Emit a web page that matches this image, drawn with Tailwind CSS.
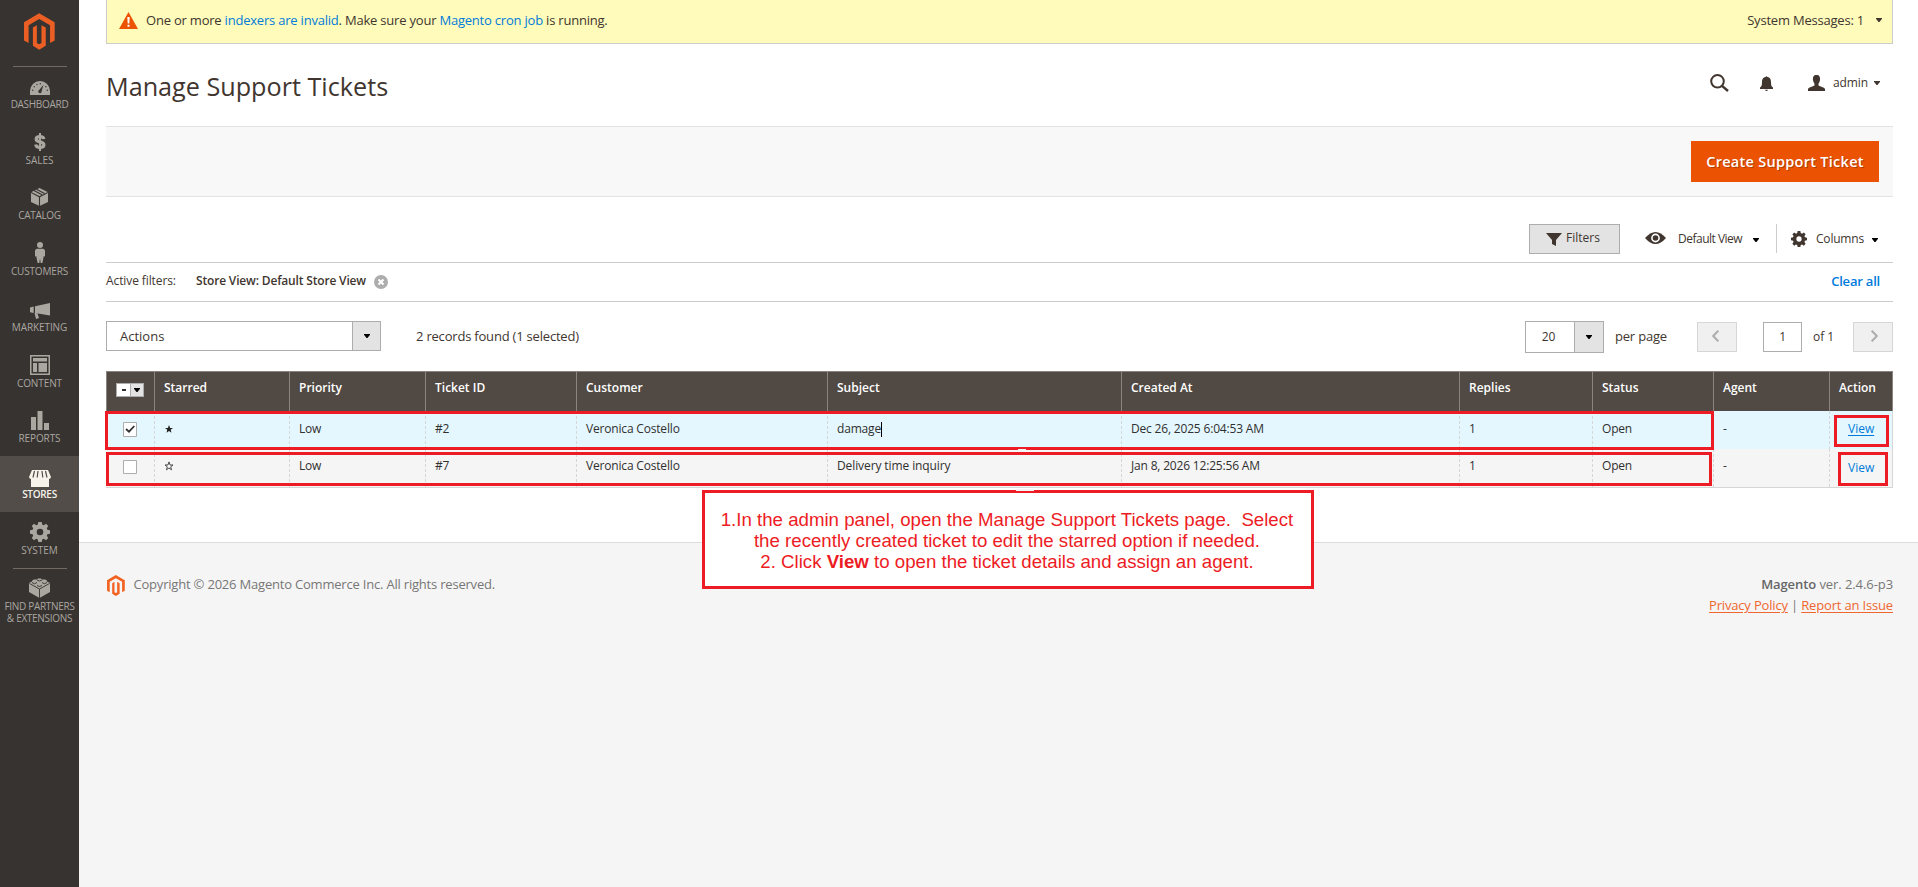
<!DOCTYPE html>
<html lang="en">
<head>
<meta charset="utf-8">
<title>Manage Support Tickets</title>
<script src="https://cdn.jsdelivr.net/npm/@tailwindcss/browser@4"></script>
</head>
<body class="relative flex h-[887px] w-[1918px] overflow-hidden bg-white font-['Open_Sans',sans-serif] text-[13px] leading-[18px] text-[#41362f]">

<svg class="hidden">
  <symbol id="logo" viewBox="72 40 94 110"><path d="M118 40 165 67V122L151 130V76L118 57 86 76V130L72 122V67ZM99 83 111 76V130L118 134 125 130V76L138 83V138L118 150 99 138Z"/></symbol>
  <symbol id="caret" viewBox="0 0 6 4"><path d="M0 0H6V.8L3.5 4H2.5L0 .8Z"/></symbol>
  <symbol id="gear" viewBox="0 0 20 20"><path fill-rule="evenodd" d="M8.3 0h3.4l.5 2.6 1.6.7L16 1.8 18.3 4l-1.5 2.2.6 1.6 2.6.5v3.4l-2.6.5-.6 1.6 1.5 2.2-2.3 2.3-2.2-1.5-1.6.7-.5 2.5H8.3l-.5-2.5-1.6-.7L4 18.300 1.700 16l1.500-2.200-.6-1.600L0 11.700V8.300l2.600-.5.6-1.600L1.700 4 4 1.800l2.200 1.500 1.600-.7ZM10 6.700a3.300 3.300 0 1 0 0 6.600 3.300 3.300 0 0 0 0-6.600Z"/></symbol>
</svg>

<!-- Sidebar -->
<nav class="flex h-full w-[79px] shrink-0 flex-col bg-[#373330] text-center text-[10px] leading-[12px] tracking-[-.3px] text-[#aaa6a0]">
  <div class="flex h-[65px] shrink-0 justify-center pt-[13px]"><svg class="h-[37px] w-[31px] fill-[#eb5f24]"><use href="#logo"/></svg></div>
  <div class="mx-[13px] h-px w-[54px] shrink-0 translate-y-px bg-[#736963]"></div>
  <a class="flex h-[55.71px] shrink-0 flex-col items-center"><span class="flex h-[32px] items-end pb-[3px]"><svg class="h-[14px] w-5 fill-current" viewBox="0 0 20 14"><path d="M0 14V10A10 10 0 0 1 20 10V14Z"/><g class="fill-[#373330]"><path d="M13.500 3.800 11.600 10.300A1.700 1.700 0 1 1 9.200 9Z"/><circle cx="2.700" cy="9.300" r=".7"/><circle cx="4.200" cy="5.800" r=".7"/><circle cx="7" cy="3.500" r=".7"/><circle cx="10.300" cy="2.700" r=".7"/><circle cx="15.900" cy="5.800" r=".7"/><circle cx="17.300" cy="9.300" r=".7"/></g></svg></span><span>DASHBOARD</span></a>
  <a class="flex h-[55.71px] shrink-0 flex-col items-center"><span class="flex h-[32px] items-end pb-[3px]"><svg class="h-[18px] w-3 fill-none stroke-current" viewBox="0 0 12 18"><path stroke-width="3.200" d="M9.800 6.200C9.600 4.300 8.200 3.600 6 3.600S2.200 4.500 2.200 6.200C2.200 10 9.900 7.800 9.900 11.800 9.900 13.600 8.400 14.500 6 14.500S2 13.700 1.700 11.600"/><path stroke-width="2" d="M6 0V18"/></svg></span><span class="tracking-normal">SALES</span></a>
  <a class="flex h-[55.71px] shrink-0 flex-col items-center"><span class="flex h-[32px] items-end pb-[3px]"><svg class="h-[18px] w-[17px]" viewBox="0 0 17 18"><path class="fill-current" d="M8.500 0 17 4.300V14L8.500 18 0 14V4.300Z"/><path class="fill-none stroke-[#373330] stroke-[1.100]" d="M0 4.500 8.500 8.800 17 4.500M8.500 8.800V18M5.500 1.200 13.500 5.400M3 2.600 11 6.800"/></svg></span><span>CATALOG</span></a>
  <a class="flex h-[55.71px] shrink-0 flex-col items-center"><span class="flex h-[32px] items-end pb-[2px]"><svg class="h-[21px] w-[10px] fill-current" viewBox="0 0 10 21"><circle cx="5" cy="3" r="3"/><path d="M2 6.800H8Q10 7 10 9V14Q9.500 15 8.700 14L8.400 16 7.400 21H5.700L5 16.500 4.300 21H2.600L1.600 16 1.300 14Q.5 15 0 14V9Q0 7 2 6.800Z"/></svg></span><span class="tracking-[-.15px]">CUSTOMERS</span></a>
  <a class="flex h-[55.71px] shrink-0 flex-col items-center"><span class="flex h-[32px] items-end pb-[2px]"><svg class="h-4 w-5 fill-current" viewBox="0 0 20 16"><path d="M20 0V12.500L5 10V3.200ZM0 4.500 3.700 3.500V10L0 9.300ZM4.500 10 7.500 10.600 9 15 6 16Z"/></svg></span><span class="tracking-[-.1px]">MARKETING</span></a>
  <a class="flex h-[55.71px] shrink-0 flex-col items-center"><span class="flex h-[32px] items-end pb-[2px]"><svg class="h-5 w-5 fill-current" viewBox="0 0 20 20"><path fill-rule="evenodd" d="M0 0H20V20H0ZM1.500 1.500V18.500H18.500V1.500Z"/><path d="M3 3H17V6.500H3ZM3 8H7V17H3ZM8.500 8H17V17H8.500Z"/></svg></span><span class="tracking-[-.1px]">CONTENT</span></a>
  <a class="flex h-[55.71px] shrink-0 flex-col items-center"><span class="flex h-[32px] items-end pb-[2px]"><svg class="h-[19px] w-[18px] fill-current" viewBox="0 0 18 19"><path d="M0 6H5V19H0ZM6.500 0H11.500V19H6.500ZM13 12H18V19H13Z"/></svg></span><span class="tracking-[-.1px]">REPORTS</span></a>
  <a class="flex h-[56px] shrink-0 flex-col items-center bg-[#524d49] font-semibold text-[#f7f3eb]"><span class="flex h-[32px] items-end pb-px"><svg class="h-[17px] w-[22px] fill-current" viewBox="0 0 22 17"><path d="M3 0H19L22 7Q21.500 9 20 9V17H2V9Q.5 9 0 7Z"/><path class="fill-none stroke-[#524d49] stroke-[1.200]" d="M5.500 1 4 7.500M9 1 8.200 7.500M13 1 13.800 7.500M16.500 1 18 7.500"/></svg></span><span>STORES</span></a>
  <a class="flex h-[56px] shrink-0 flex-col items-center"><span class="flex h-[32px] items-end pb-[2px]"><svg class="h-5 w-5 fill-current"><use href="#gear"/></svg></span><span class="tracking-normal">SYSTEM</span></a>
  <div class="mx-[13px] h-px w-[54px] shrink-0 bg-[#736963]"></div>
  <a class="flex shrink-0 flex-col items-center"><span class="flex h-[31px] items-end pb-[2px]"><svg class="h-[21px] w-[21px] fill-current" viewBox="0 0 21 21"><path d="M0 6 3 4.500C3 2.500 7 2.200 7.500 3 7 1 14 1 13.500 3 15 2.200 18 2.500 18 4.500L21 6V15L10.500 21 0 15Z"/><path class="fill-none stroke-[#373330] stroke-[.9]" d="M.5 6.500 10.500 12 20.500 6.500M10.500 12V21M3 5.500Q5.500 8 8 5.500M13 5.500Q15.500 8 18 5.500M8 3Q10.500 5 13 3M8 8.500Q10.500 10.500 13 8.500"/></svg></span><span class="whitespace-nowrap">FIND PARTNERS<br>&amp; EXTENSIONS</span></a>
</nav>

<main class="flex min-w-0 flex-1 flex-col">
  <div class="flex h-[542px] shrink-0 flex-col pr-[25px] pl-[27px]">
    <!-- System message -->
    <div class="flex h-11 shrink-0 items-center border border-t-0 border-[#ccc] bg-[#fffbbb] pb-[3px] pl-3 pr-[10px] tracking-[-.21px]">
      <svg class="h-[17px] w-[19px]" viewBox="0 0 19 17"><path class="fill-[#eb5202]" d="M9.500 0 19 17H0Z"/><path class="fill-white" d="M8.300 5H10.700L10.300 11.500H8.700ZM8.500 12.700H10.500V14.700H8.500Z"/></svg>
      <span class="ml-2 flex-1 whitespace-pre">One or more <a class="text-[#007bdb]">indexers are invalid</a>. Make sure your <a class="text-[#007bdb]">Magento cron job</a> is running.</span>
      <span class="mr-3">System Messages: 1</span>
      <svg class="h-1 w-1.5 fill-current"><use href="#caret"/></svg>
    </div>
    <!-- Title row -->
    <header class="flex h-[82px] shrink-0 items-start">
      <h1 class="mt-[23px] flex-1 text-[25.2px] leading-[38px]">Manage Support Tickets</h1>
      <div class="mt-7 flex h-[22px] items-center">
        <svg class="h-[18px] w-[19px] fill-none stroke-current" viewBox="0 0 19 18"><circle cx="7.500" cy="7.300" r="6.300" stroke-width="2"/><path stroke-width="2.400" d="M12 11.800 18 17"/></svg>
        <svg class="ml-[31px] h-[15px] w-[13px] fill-current" viewBox="0 0 13 15"><path d="M5.500 1Q6.500-.5 7.500 1C10.500 1.500 11 4 11 6 11 9.500 11.500 10.500 13 11.500V13H0V11.500C1.500 10.500 2 9.500 2 6 2 4 2.500 1.500 5.500 1ZM5 13.700H8Q7.500 15 6.500 15T5 13.700Z"/></svg>
        <svg class="ml-[35px] h-4 w-[17px] fill-current" viewBox="0 0 17 16"><path d="M8.500 0C11.500 0 12.300 2 12 5 11.700 7.500 10.700 8 10.500 9V10.500C12 11.500 16 12 17 14V16H0V14C1 12 5 11.500 6.500 10.500V9C6.300 8 5.300 7.500 5 5 4.700 2 5.500 0 8.500 0Z"/></svg>
        <span class="ml-2 w-[33px] text-[12px] tracking-[-.1px]">admin</span>
        <svg class="mr-[13px] ml-2 h-1 w-1.5 fill-current"><use href="#caret"/></svg>
      </div>
    </header>
    <!-- Page actions -->
    <div class="flex h-[71px] shrink-0 items-center justify-end border-y border-[#e3e3e3] bg-[#f8f8f8] pr-[14px]">
      <button class="h-[41px] w-[188px] bg-[#eb5202] pt-px text-[14.500px] font-semibold tracking-[.28px] whitespace-nowrap text-white [text-shadow:1px_1px_0_rgba(0,0,0,.25)]">Create Support Ticket</button>
    </div>
    <!-- Grid controls -->
    <div class="flex h-[66px] shrink-0 items-start justify-end border-b border-[#ccc] pt-[27px] text-[12px]">
      <button class="flex h-[30px] w-[91px] items-center border border-[#adadad] bg-[#e3e3e3] pl-4">
        <svg class="h-[13px] w-[16px] fill-current" viewBox="0 0 16 13"><path d="M0 0H16L10 7V13L6 11V7Z"/></svg><span class="ml-1 pb-0.5">Filters</span>
      </button>
      <div class="flex h-[29px] items-center border-r border-[#ccc] pr-[17px] pl-[25px]">
        <svg class="mb-px h-3 w-[21px]" viewBox="0 0 21 12"><path class="fill-current" d="M0 6Q10.500-6 21 6 10.500 18 0 6Z"/><circle class="fill-none stroke-white stroke-[1.600]" cx="10.500" cy="6" r="3.600"/></svg>
        <span class="ml-3 w-[64px] whitespace-nowrap tracking-[-.5px]">Default View</span>
        <svg class="mt-0.5 ml-[11px] h-1 w-1.5 fill-black"><use href="#caret"/></svg>
      </div>
      <div class="flex h-[29px] items-center pr-[15px] pl-[14px]">
        <svg class="h-4 w-4 fill-current"><use href="#gear"/></svg>
        <span class="ml-[9px] w-[46px] tracking-[-.2px]">Columns</span>
        <svg class="mt-0.5 ml-[10px] h-1 w-1.5 fill-black"><use href="#caret"/></svg>
      </div>
    </div>
    <!-- Active filters -->
    <div class="flex h-[39px] shrink-0 items-center border-b border-[#ccc] pb-[2px] text-[12px]">
      <span class="w-[90px] tracking-[-.1px]">Active filters:</span>
      <span class="w-[170px] font-semibold tracking-[-.17px] whitespace-nowrap">Store View: Default Store View</span>
      <svg class="mt-[2px] ml-2 h-[14px] w-[14px]" viewBox="0 0 14 14"><circle class="fill-[#adadad]" cx="7" cy="7" r="7"/><path class="fill-none stroke-white stroke-2" d="M4.500 4.500 9.500 9.500M9.500 4.500 4.500 9.500"/></svg>
      <span class="mr-[13px] ml-auto text-[13px] font-semibold tracking-[-.2px] text-[#007bdb]">Clear all</span>
    </div>
    <!-- Toolbar -->
    <div class="flex h-[69px] shrink-0 items-start pt-[19px] tracking-[-.2px]">
      <div class="flex h-[30px] w-[275px] border border-[#adadad]">
        <span class="flex-1 pt-[5px] pl-[13px] tracking-normal">Actions</span>
        <span class="flex w-7 items-center justify-center border-l border-[#adadad] bg-[#e3e3e3]"><svg class="h-1 w-1.5 fill-black"><use href="#caret"/></svg></span>
      </div>
      <span class="mt-1.5 ml-[35px] flex-1">2 records found (1 selected)</span>
      <div class="flex h-8 w-[79px] border border-[#adadad]">
        <span class="flex-1 pt-1.5 pr-[3px] text-center text-[12px] tracking-normal">20</span>
        <span class="flex w-[29px] items-center justify-center border-l border-[#adadad] bg-[#e3e3e3]"><svg class="h-1 w-1.5 fill-black"><use href="#caret"/></svg></span>
      </div>
      <span class="mt-1.5 ml-[11px] w-[82px]">per page</span>
      <span class="mt-px flex h-[30px] w-10 items-center justify-center border border-[#d6d6d6] bg-[#f0f0f0]"><svg class="mr-[3px] mb-[3px] h-3 w-[7px] fill-none stroke-[#adadad] stroke-2" viewBox="0 0 7 12"><path d="M6.300.7 1.200 6 6.300 11.300"/></svg></span>
      <span class="mt-px ml-[26px] h-[30px] w-[39px] border border-[#adadad] pt-[5px] text-center text-[12px]">1</span>
      <span class="mt-[7px] ml-[11px] w-[40px] text-[12px] tracking-normal">of 1</span>
      <span class="mt-px flex h-[30px] w-10 items-center justify-center border border-[#d6d6d6] bg-[#f0f0f0]"><svg class="mb-[3px] ml-[3px] h-3 w-[7px] fill-none stroke-[#adadad] stroke-2" viewBox="0 0 7 12"><path d="M.7.7 5.800 6 .7 11.300"/></svg></span>
    </div>
    <!-- Tickets grid -->
    <div class="relative text-[12px] text-[#303030]">
      <div class="grid h-10 grid-cols-[49px_135px_136px_151px_251px_294px_338px_133px_121px_116px_63px] border-t border-[#8a837f] bg-[#514943] font-semibold text-white *:border-r *:border-[#8a837f] *:pt-[7px] *:pl-[9px]">
        <div class="flex items-start border-l"><span class="mt-[4px] flex h-[14px] w-7 border border-[#adadad] bg-white text-black"><span class="flex flex-1 items-center justify-center"><i class="h-0.5 w-1 bg-[#303030]"></i></span><span class="flex w-[13px] items-center justify-center border-l border-[#adadad] bg-[#e3e3e3]"><svg class="h-1 w-1.5"><use href="#caret"/></svg></span></span></div>
        <div>Starred</div><div>Priority</div><div>Ticket ID</div><div>Customer</div><div>Subject</div><div>Created At</div><div>Replies</div><div>Status</div><div>Agent</div><div>Action</div>
      </div>
      <div class="grid h-[38px] grid-cols-[49px_135px_136px_151px_251px_294px_338px_133px_121px_116px_63px] border-r border-[#d6d6d6] bg-[#e5f7fe] tracking-[-.18px] *:border-r *:border-dashed *:border-[#d6d6d6] *:pt-[9px] *:pl-[9px] *:last:border-r-0">
        <div><svg class="ml-2 mt-[2px] h-[15px] w-[14px] fill-white stroke-[#adadad]" viewBox="0 0 14 15"><path d="M.5.5H13.500V14.500H.5Z"/><path class="fill-none stroke-[#303030] stroke-[1.700]" d="M3 7 6 9.700 11.300 4"/></svg></div>
        <div><svg class="mt-1 h-2.5 w-2.5 fill-[#222]" viewBox="0 0 10 10"><path d="M5 .9 6.100 4H9L6.700 5.800 7.500 8.800 5 7 2.500 8.800 3.300 5.800 1 4H3.900Z"/></svg></div>
        <div>Low</div><div>#2</div><div>Veronica Costello</div><div class="flex items-start">damage<i class="mt-[2px] h-[15px] w-px bg-black"></i></div><div>Dec 26, 2025 6:04:53 AM</div><div>1</div><div>Open</div><div>-</div>
        <div><a class="ml-[9px] tracking-normal text-[#007bdb] underline underline-offset-2">View</a></div>
      </div>
      <div class="grid h-[39px] grid-cols-[49px_135px_136px_151px_251px_294px_338px_133px_121px_116px_63px] border-r border-b border-[#d6d6d6] bg-[#f5f5f5] tracking-[-.18px] *:border-r *:border-dashed *:border-[#d6d6d6] *:pt-[8px] *:pl-[9px] *:last:border-r-0">
        <div><svg class="ml-2 mt-[3px] h-[14px] w-[14px] fill-white stroke-[#adadad]" viewBox="0 0 14 14"><path d="M.5.5H13.500V13.500H.5Z"/></svg></div>
        <div><svg class="mt-1 h-2.5 w-2.5 fill-none stroke-[#222] stroke-[.8]" viewBox="0 0 10 10"><path d="M5 .9 6.100 4H9L6.700 5.800 7.500 8.800 5 7 2.500 8.800 3.300 5.800 1 4H3.900Z"/></svg></div>
        <div>Low</div><div>#7</div><div>Veronica Costello</div><div class="tracking-[-.1px]">Delivery time inquiry</div><div>Jan 8, 2026 12:25:56 AM</div><div>1</div><div>Open</div><div>-</div>
        <div class="mt-0.5"><a class="ml-[9px] tracking-normal text-[#007bdb]">View</a></div>
      </div>
      <!-- Highlight frames -->
      <div class="absolute top-10 -left-px h-[39px] w-[1609px] border-3 border-[#ed1c24]"></div>
      <div class="absolute top-[81px] left-0 h-[34px] w-[1606px] border-3 border-[#ed1c24]"></div>
      <div class="absolute top-11 left-[1728px] h-8 w-[55px] border-3 border-[#ed1c24]"></div>
      <div class="absolute top-[81px] left-[1732px] h-[34px] w-[50px] border-3 border-[#ed1c24]"></div>
      <!-- Small light patch under the first frame -->
      <div class="absolute top-[78px] left-[912px] h-px w-[8px] bg-[#f5f5f5]"></div>
    </div>
  </div>
  <!-- Footer -->
  <footer class="flex flex-1 items-start border-t border-[#ddd] bg-[#f5f5f5] pt-[32px] pr-[25px] pl-[28px] tracking-[-.2px] text-[#777]">
    <svg class="h-[21px] w-[18px] fill-[#f26322]"><use href="#logo"/></svg>
    <span class="ml-[8.5px] flex-1">Copyright © 2026 Magento Commerce Inc. All rights reserved.</span>
    <div class="text-right leading-[21px]"><div class="-mt-px tracking-[-.08px]"><b class="font-semibold text-[#666]">Magento</b> ver. 2.4.6-p3</div><div class="tracking-[-.17px]"><a class="text-[#ef672f] underline underline-offset-2">Privacy Policy</a> | <a class="text-[#ef672f] underline underline-offset-2">Report an Issue</a></div></div>
  </footer>
</main>

<!-- Callout -->
<div class="absolute top-[490px] left-[702px] h-[99px] w-[612px] border-3 border-[#ed1c24] bg-white pt-[16px] pr-[2px] text-center font-['Liberation_Sans',sans-serif] text-[18.660px] leading-[21px] whitespace-pre text-[#ed1c24]"><div>1.In the admin panel, open the Manage Support Tickets page.  Select</div><div>the recently created ticket to edit the starred option if needed.</div><div>2. Click <b>View</b> to open the ticket details and assign an agent.</div></div>
<div class="absolute top-[489px] left-[1016px] h-[2px] w-[18px] bg-[#f5f5f5]"></div>
</body>
</html>
